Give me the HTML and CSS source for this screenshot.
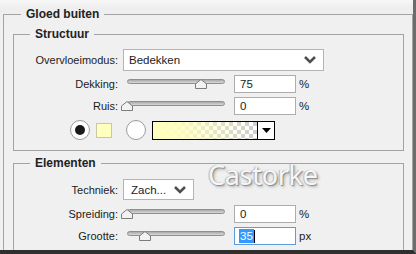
FILE: index.html
```html
<!DOCTYPE html>
<html lang="nl">
<head>
  <meta charset="UTF-8" />
  <meta name="viewport" content="width=device-width, initial-scale=1.0"/>
  <title>Gloed buiten</title>
  <link rel="stylesheet" href="styles.css">
</head>
<body>

  <div class="window">
    <fieldset class="panel">
      <legend>Gloed buiten</legend>

      <fieldset class="group group-structure">
        <legend>Structuur</legend>

        <div class="row row-blend">
          <span class="label">Overvloeimodus:</span>
          <div class="select select-wide">
            <span>Bedekken</span>
            <svg class="chevron" width="12" height="8" viewBox="0 0 12 8"><polyline points="1,1 6,6 11,1" /></svg>
          </div>
        </div>

        <div class="row row-field">
          <span class="label">Dekking:</span>
          <div class="slider">
            <div class="track"></div>
            <svg class="thumb" style="left: calc(75% - 6px)" width="12" height="10" viewBox="0 0 12 10"><polygon points="6,0.5 11.5,5 11.5,9.5 0.5,9.5 0.5,5" /></svg>
          </div>
          <div class="field">75</div>
          <span class="unit">%</span>
        </div>

        <div class="row row-field row-noise">
          <span class="label">Ruis:</span>
          <div class="slider">
            <div class="track"></div>
            <svg class="thumb" style="left: calc(0% - 6px)" width="12" height="10" viewBox="0 0 12 10"><polygon points="6,0.5 11.5,5 11.5,9.5 0.5,9.5 0.5,5" /></svg>
          </div>
          <div class="field">0</div>
          <span class="unit">%</span>
        </div>

        <div class="row row-color">
          <span class="radio checked"></span>
          <span class="swatch"></span>
          <span class="radio"></span>
          <div class="gradient-picker">
            <div class="gradient"></div>
            <div class="gradient-btn">
              <svg width="9" height="5" viewBox="0 0 9 5"><polygon points="0,0 9,0 4.5,5" /></svg>
            </div>
          </div>
        </div>
      </fieldset>

      <fieldset class="group group-elements">
        <legend>Elementen</legend>

        <div class="row row-technique">
          <span class="label">Techniek:</span>
          <div class="select select-small">
            <span>Zach...</span>
            <svg class="chevron" width="12" height="8" viewBox="0 0 12 8"><polyline points="1,1 6,6 11,1" /></svg>
          </div>
        </div>

        <div class="row row-field row-spread">
          <span class="label">Spreiding:</span>
          <div class="slider">
            <div class="track"></div>
            <svg class="thumb" style="left: calc(0% - 6px)" width="12" height="10" viewBox="0 0 12 10"><polygon points="6,0.5 11.5,5 11.5,9.5 0.5,9.5 0.5,5" /></svg>
          </div>
          <div class="field">0</div>
          <span class="unit">%</span>
        </div>

        <div class="row row-field row-size">
          <span class="label">Grootte:</span>
          <div class="slider">
            <div class="track"></div>
            <svg class="thumb" style="left: calc(18% - 6px)" width="12" height="10" viewBox="0 0 12 10"><polygon points="6,0.5 11.5,5 11.5,9.5 0.5,9.5 0.5,5" /></svg>
          </div>
          <div class="field active"><span class="selected">35</span><span class="caret"></span></div>
          <span class="unit">px</span>
        </div>
      </fieldset>
    </fieldset>

    <div class="watermark">Castorke</div>
  </div>

</body>
</html>
```

FILE: styles.css
```css
body {
  margin: 0;
  padding: 0;
  background: #f0f0f0;
  font-family: "Liberation Sans", Arial, sans-serif;
  font-size: 11px;
  color: #1b1b1b;
}

.window {
  position: relative;
  height: 254px;
  box-sizing: border-box;
  overflow: hidden;
  background: linear-gradient(#f7f7f7, #eeeeee 8px, #f0f0f0 20px);
  border-right: 3px solid #6c6c6c;
  border-bottom: 4px solid #2f2f2f;
}

fieldset {
  margin: 0;
  min-width: 0;
  border: 1px solid #a3a3a3;
}

legend {
  font-size: 12px;
  font-weight: bold;
  line-height: 14px;
  color: #222;
  padding: 0 5px;
}

.panel {
  margin: 7px 0 0 3px;
  padding: 0 8px 40px 9px;
}

.panel > legend {
  margin-left: 8px;
}

.group {
  padding: 0;
}

.group > legend {
  margin-left: 16px;
}

.group-structure {
  margin-top: 6px;
  padding: 8px 0 10px 0;
}

.group-elements {
  margin-top: 5px;
  padding: 9px 0 20px 0;
}

/* rows */
.row {
  display: flex;
  align-items: center;
}

.label {
  width: 104px;
  margin-right: 5px;
  text-align: right;
  white-space: nowrap;
}

.row-blend {
  height: 22px;
}

.row-field {
  height: 18px;
  margin-top: 4px;
}

.row-noise {
  margin-top: 4px;
}

.row-color {
  height: 20px;
  margin-top: 5px;
  padding-left: 56px;
}

.row-technique {
  height: 21px;
}

.row-spread {
  margin-top: 5px;
}

/* select boxes */
.select {
  box-sizing: border-box;
  height: 100%;
  display: flex;
  align-items: center;
  justify-content: space-between;
  background: #fff;
  border: 1px solid #b4b4b4;
  padding: 0 7px 0 5px;
  font-size: 11.5px;
}

.select-wide {
  width: 201px;
}

.select-small {
  width: 71px;
  padding-left: 7px;
}

.chevron polyline {
  fill: none;
  stroke: #4f4f4f;
  stroke-width: 2.6;
}

/* sliders */
.slider {
  position: relative;
  align-self: flex-start;
  width: 98px;
  height: 18px;
  margin: 0 9px 0 4px;
}

.track {
  margin-top: 4px;
  height: 3px;
  border: 1px solid #8f8f8f;
  border-radius: 3px;
  background: linear-gradient(#a9a9a9, #d9d9d9);
}

.thumb {
  position: absolute;
  top: 4px;
}

.thumb polygon {
  fill: #f2f2f2;
  stroke: #7c7c7c;
  stroke-width: 1;
}

/* number fields */
.field {
  box-sizing: border-box;
  width: 62px;
  height: 100%;
  display: flex;
  align-items: center;
  padding-left: 5px;
  background: #fff;
  border: 1px solid #adadad;
  font-size: 11.5px;
}

.field.active {
  border-color: #5b9de0;
  padding-left: 4px;
}

.selected {
  background: #3399ff;
  color: #fff;
  line-height: 14px;
  padding: 0 1px;
}

.caret {
  width: 1px;
  height: 13px;
  background: #000;
}

.unit {
  margin-left: 3px;
  font-size: 11.5px;
}

/* color row */
.radio {
  box-sizing: border-box;
  width: 20px;
  height: 20px;
  border-radius: 50%;
  border: 1px solid #9a9a9a;
  background: #fff;
  display: flex;
  align-items: center;
  justify-content: center;
}

.radio.checked::after {
  content: "";
  width: 10px;
  height: 10px;
  border-radius: 50%;
  background: #1a1a1a;
}

.swatch {
  box-sizing: border-box;
  width: 16px;
  height: 15px;
  margin: 0 14px 0 6px;
  background: #ffffbe;
  border: 1px solid #c8c8a8;
}

.gradient-picker {
  box-sizing: border-box;
  display: flex;
  width: 123px;
  height: 19px;
  margin-left: 6px;
  border: 1px solid #000;
}

.gradient {
  flex: 1;
  background:
    linear-gradient(to right, #ffffbe 0%, rgba(255, 255, 190, 0.9) 25%, rgba(255, 255, 190, 0) 95%),
    repeating-conic-gradient(#cfcfcf 0 25%, #ffffff 0 50%) 0 0 / 8px 8px;
}

.gradient-btn {
  width: 16px;
  border-left: 1px solid #000;
  background: #fff;
  display: flex;
  align-items: center;
  justify-content: center;
}

.gradient-btn polygon {
  fill: #000;
}

/* watermark over the panel */
.watermark {
  position: absolute;
  left: 208px;
  top: 156px;
  font-family: "Noto Sans", sans-serif;
  font-size: 27px;
  letter-spacing: -0.3px;
  color: #f6f6f6;
  text-shadow: 1px 1px 1px #8c8c8c, -1px 0 1px #b5b5b5, 2px 2px 3px rgba(0, 0, 0, 0.25);
}
```
